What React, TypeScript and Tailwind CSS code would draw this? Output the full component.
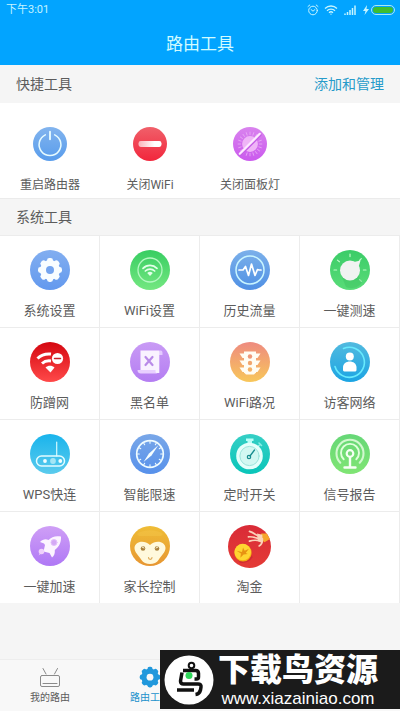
import type { ReactNode } from "react";

type IconProps = { id: string; from: string; to: string; children: ReactNode };

function Disc({ id, from, to, children }: IconProps) {
  return (
    <svg viewBox="0 0 40 40" className="size-full" aria-hidden="true" fill="none" strokeLinecap="round" strokeLinejoin="round">
      <defs>
        <linearGradient id={id} x1="0" y1="0" x2="0" y2="1">
          <stop offset="0" stopColor={from} />
          <stop offset="1" stopColor={to} />
        </linearGradient>
      </defs>
      <circle cx="20" cy="20" r="20" fill={`url(#${id})`} />
      {children}
    </svg>
  );
}

const spokes = (n: number) => Array.from({ length: n }, (_, i) => (i * 360) / n);

function Gear({ body, hole }: { body: string; hole: string }) {
  return (
    <g>
      {spokes(8).map((a) => (
        <rect key={a} x="17" y="8" width="6" height="8" rx="2.4" fill={body} transform={`rotate(${a} 20 20)`} />
      ))}
      <circle cx="20" cy="20" r="10" fill={body} />
      <circle cx="20" cy="20" r="4" fill={hole} />
    </g>
  );
}

const PowerIcon = () => (
  <Disc id="power" from="#82b4ee" to="#589cec">
    <path d="M14.500 9.200a12.800 12.800 0 1 0 11 0" stroke="#e6fbff" strokeWidth="1.800" />
    <path d="M20 5.500v9" stroke="#e6fbff" strokeWidth="2.200" />
  </Disc>
);

const WifiOffIcon = () => (
  <Disc id="wifi-off" from="#f0606a" to="#f2263c">
    <defs>
      <linearGradient id="bar">
        <stop offset="0" stopColor="#fbb3b9" />
        <stop offset=".7" stopColor="#fff" />
      </linearGradient>
    </defs>
    <rect x="6.500" y="16.500" width="27" height="7" rx="2.500" fill="url(#bar)" />
  </Disc>
);

const LampOffIcon = () => (
  <Disc id="lamp" from="#d983ee" to="#cb5aee">
    {spokes(20).map((a) => (
      <path key={a} d="M20 6v3" stroke="#eab0f6" strokeWidth=".9" transform={`rotate(${a} 20 20)`} />
    ))}
    <circle cx="20" cy="20" r="9.300" fill="#efb5f7" />
    <path d="M9 33 32.500 9.500" stroke="#c65fe6" strokeWidth="2.400" />
    <path d="M8 31.500 31.500 8" stroke="#fdeaff" strokeWidth="2.600" />
  </Disc>
);

const SettingsIcon = () => (
  <Disc id="settings" from="#82aef0" to="#6399ee">
    <Gear body="#f8fdff" hole="#73a4ef" />
  </Disc>
);

const WifiIcon = () => (
  <Disc id="wifi" from="#38cd62" to="#74e781">
    <circle cx="20" cy="20" r="12" stroke="#b4f8c2" strokeWidth="1.300" />
    <path d="M13 18.300a10 10 0 0 1 14 0M15.300 21a6.800 6.800 0 0 1 9.400 0" stroke="#e3ffe9" strokeWidth="1.700" />
    <path d="m20 26-2.800-3a4 4 0 0 1 5.600 0Z" fill="#e3ffe9" />
  </Disc>
);

const TrafficIcon = () => (
  <Disc id="traffic" from="#7bb0ea" to="#5090e4">
    <circle cx="20" cy="20" r="14" stroke="#c8f5ff" strokeWidth="1.500" />
    <path d="M9 20h4l2.500-3.500 3 9 3-11.500 3.500 11.500 2.500-6 1.500 .5h2" stroke="#fff" strokeWidth="1.700" />
  </Disc>
);

const SpeedIcon = () => (
  <Disc id="speed" from="#3bcc68" to="#59dc78">
    {[-90, -52, 0, 45, 90, 135].map((a) => (
      <path key={a} d="M20 4v2.600" stroke="#bffbc9" strokeWidth="1.200" transform={`rotate(${a} 20 20)`} />
    ))}
    <path d="m12 27 4 10c4 2 12 2 16-5l-4-7Z" fill="#36b95a" opacity=".35" />
    <circle cx="20" cy="20.500" r="10" fill="#f1f3f1" />
    <path d="m24 12 6.500-1.500-2 6.500Z" fill="#f1f3f1" />
  </Disc>
);

const GuardIcon = () => (
  <Disc id="guard" from="#d40710" to="#ff4949">
    <path d="M7.500 16.500c4-4 8.500-5 13.500-4.500M12 21.500c2.500-2.300 5.500-3 9-2.500" stroke="#fff" strokeWidth="3" strokeLinecap="butt" />
    <path d="m20.500 30.500-5-5c2.500-2.300 6.500-2.300 9 0Z" fill="#fff" />
    <circle cx="27.500" cy="16.500" r="5.600" fill="#fff" />
    <path d="M24.500 16.500h6" stroke="#c92028" strokeWidth="1.500" />
  </Disc>
);

const BlacklistIcon = () => (
  <Disc id="black" from="#c99bf5" to="#b47df2">
    <path d="M28 8.500h2.500c1.500 0 2 1 2 2.500V13H28Z" fill="#e4caff" />
    <path d="M10.500 8.500H28c1 0 1.300 1 1.300 2V31H12.500L10.500 28Z" fill="#f9f2ff" />
    <path d="M7.500 28h18v1.500c0 1.500 1.500 2 3.500 2H11c-2.500 0-3.500-1.500-3.500-3.500Z" fill="#e8cfff" />
    <path d="m15.500 15 7 8m0-8-7 8" stroke="#b98be8" strokeWidth="2.200" />
  </Disc>
);

const RoadIcon = () => (
  <Disc id="road" from="#ee8b80" to="#f8c75a">
    {[10, 17, 24].map((y) => (
      <path key={y} d={`M9.500 ${y + 1.5}h21l-3 4.500h-15Z`} fill="#fffdf4" />
    ))}
    <path d="M14 9.500h12v21l-2 2h-8l-2-2Z" fill="#fffdf4" />
    <circle cx="20" cy="14.500" r="2.200" fill="#ee9878" />
    <circle cx="20" cy="21" r="2.200" fill="#f1a66e" />
    <circle cx="20" cy="27.500" r="2.200" fill="#f4b267" />
  </Disc>
);

const GuestIcon = () => (
  <Disc id="guest" from="#52badf" to="#1ba4e3">
    <path d="M13.500 6.500A15 15 0 1 1 5 24.500" stroke="#68eafd" strokeWidth="1.600" />
    <circle cx="19.800" cy="14.500" r="4" fill="#fff" />
    <path d="M13 28v-2.500c0-8 13.500-8 13.500 0V28c0 1-1 1.500-2 1.500H15c-1 0-2-.5-2-1.500Z" fill="#fff" />
  </Disc>
);

const WpsIcon = () => (
  <Disc id="wps" from="#19b4ec" to="#5bcbed">
    <path d="M26.700 8v14" stroke="#d4faff" strokeWidth="1.200" />
    <rect x="6.500" y="22" width="28" height="10" rx="5" stroke="#e2fcff" strokeWidth="1.500" />
    <circle cx="15" cy="27" r="1.900" fill="#f2feff" />
    <circle cx="23" cy="27" r="2.900" fill="#a5e6f5" />
    <circle cx="30.300" cy="27" r="1.900" fill="#f2feff" />
  </Disc>
);

const LimitIcon = () => (
  <Disc id="limit" from="#79a7e8" to="#5791eb">
    <circle cx="20" cy="20" r="13.300" stroke="#eefbff" strokeWidth="1.700" />
    {spokes(12).map((a) => (
      <path key={a} d="M20 7.500v1.800" stroke="#eefbff" strokeWidth="1.100" transform={`rotate(${a} 20 20)`} />
    ))}
    <path d="m28.500 11-7 10.500-8 6.500 5.500-8.500Z" fill="#f6feff" />
  </Disc>
);

const TimerIcon = () => (
  <Disc id="timer" from="#35cfc5" to="#09c5b9">
    <path d="M16 4.500h7.500v2.500H22V11h-4.500V7H16Z" fill="#b9fff7" />
    <path d="m27.500 13 2.800-2.800M29 9l2.500 2.500" stroke="#8aeee5" strokeWidth="1.600" />
    <circle cx="19.500" cy="22" r="13.300" fill="#e4fffb" />
    <circle cx="19.500" cy="22" r="9.600" fill="#d2f8f2" stroke="#9ce4db" strokeWidth="1" />
    <path d="m24.500 16-4.500 6" stroke="#198d90" strokeWidth="1.300" />
    <circle cx="19" cy="23" r="1.700" stroke="#198d90" strokeWidth="1.200" />
  </Disc>
);

const SignalIcon = () => (
  <Disc id="signal" from="#66d777" to="#80e574">
    <path d="M10.300 28.700a13.500 13.500 0 1 1 19.400 0" stroke="#d2f8cf" strokeWidth="2.100" />
    <path d="M13.700 25.300a9 9 0 1 1 12.600 0" stroke="#e0ffdc" strokeWidth="1.900" />
    <circle cx="20" cy="19.500" r="3.300" fill="#77d979" stroke="#f6fff5" strokeWidth="2.200" />
    <path d="M20 23.500V33M14.500 33.500h11" stroke="#f6fff5" strokeWidth="2.400" />
  </Disc>
);

const RocketIcon = () => (
  <Disc id="rocket" from="#cf9ff6" to="#af78f5">
    <path d="M31 10.500c-5-1-9.500 0-12.500 3.500-3-1.500-6-.5-8.500 2l4 1.500 1 1.500-1.500 6.500 6 1.500 2.500 4.500c2.500-2 3-4.500 2.800-7.500 5-3.500 6.500-8.500 6.200-13.500Z" fill="#fcf4ff" />
    <circle cx="24" cy="16.500" r="3" fill="#d4a9f5" stroke="#e3bffb" />
    <circle cx="11.500" cy="25.500" r="2.800" fill="#efd1fb" />
    <path d="m8.500 29.500 1.500-2.500h2Z" fill="#efd1fb" />
  </Disc>
);

const MonkeyIcon = () => (
  <Disc id="monkey" from="#efbd36" to="#e79632">
    <path d="M7 8C13 3 27 3 33 8L31 10H9Z" fill="#f4c347" opacity=".5" />
    <path d="M4.500 22c0-6 9-9 15.500-3 6.500-6 15.500-3 15.500 3 0 4.500-4 7-7 12-3 5.200-14 5.200-17 0-3-5-7-7.500-7-12Z" fill="#fff9dc" />
    <circle cx="13" cy="22.500" r="2.300" fill="#a9813d" />
    <circle cx="27" cy="22.500" r="2.300" fill="#a9813d" />
    <path d="m12 21 2 1m14-1-2 1" stroke="#fff9dc" strokeWidth="1" />
    <path d="M18.500 31.500c0 2.500 3.500 2.500 3.500 0" stroke="#dda957" strokeWidth="1.200" />
  </Disc>
);

const GoldIcon = () => (
  <Disc id="gold" from="#d92b37" to="#e43b36">
    <path d="m8 31 3 4c5 1 9-1 12-5l-3-5Z" fill="#b91f2e" opacity=".45" />
    <path d="m31 8 5 0 3 5-5 3-4-3Z" fill="#f6a62c" />
    <path d="M32 13c0 2 0 5-3 6.500M31 12c-4-2-7-5-11-6m10 7c-4-1-7-2.500-11-2m10 3.500c-3-.500-6-.500-9 .500" stroke="#fbd3b9" strokeWidth="1.600" />
    <path d="m27 8 5 1v8l-4-2Z" fill="#fbd3b9" />
    <circle cx="14" cy="26" r="8" fill="#f5a812" />
    <circle cx="13.700" cy="25.200" r="7.700" fill="#ffd531" />
    <path d="m8 24 5 1 1-4 1.500 3 4-2-3 4 2 1-4 .5-3 3 .5-4Z" fill="#e79312" />
  </Disc>
);

const quickTools = [
  { label: "重启路由器", icon: <PowerIcon /> },
  { label: "关闭WiFi", icon: <WifiOffIcon /> },
  { label: "关闭面板灯", icon: <LampOffIcon /> },
];

const systemTools = [
  { label: "系统设置", icon: <SettingsIcon /> },
  { label: "WiFi设置", icon: <WifiIcon /> },
  { label: "历史流量", icon: <TrafficIcon /> },
  { label: "一键测速", icon: <SpeedIcon /> },
  { label: "防蹭网", icon: <GuardIcon /> },
  { label: "黑名单", icon: <BlacklistIcon /> },
  { label: "WiFi路况", icon: <RoadIcon /> },
  { label: "访客网络", icon: <GuestIcon /> },
  { label: "WPS快连", icon: <WpsIcon /> },
  { label: "智能限速", icon: <LimitIcon /> },
  { label: "定时开关", icon: <TimerIcon /> },
  { label: "信号报告", icon: <SignalIcon /> },
  { label: "一键加速", icon: <RocketIcon /> },
  { label: "家长控制", icon: <MonkeyIcon /> },
  { label: "淘金", icon: <GoldIcon />, large: true },
];

function StatusBar() {
  return (
    <div className="flex h-5 items-center justify-between pr-[5px] pl-1.5 text-[#c5f4ff]">
      <span className="text-[11px] leading-5">下午3:01</span>
      <div className="flex items-center gap-[5px]" aria-hidden="true">
        <svg className="size-3" viewBox="0 0 12 12" fill="none" stroke="currentColor" strokeLinecap="round">
          <circle cx="6" cy="6.500" r="4.300" />
          <path d="M1 2.500 2.800 1M11 2.500 9.200 1M4 5.500l2 1.700 2-1.700" />
        </svg>
        <svg className="h-3 w-3.5" viewBox="0 0 14 12" fill="none" stroke="currentColor" strokeWidth="1.300">
          <path d="M1 4.500a8.500 8.500 0 0 1 12 0M3 6.700a5.700 5.700 0 0 1 8 0M5 8.700a2.900 2.900 0 0 1 4 0" />
          <path d="m7 11-1-1.300h2Z" fill="currentColor" stroke="none" />
        </svg>
        <svg className="h-3 w-3.5" viewBox="0 0 14 12" stroke="currentColor" strokeWidth="1.500">
          <path d="M2 11V9.500M4.500 11V8M7 11V6M9.500 11V4M12 11V1.500" />
        </svg>
        <svg className="h-3 w-2" viewBox="0 0 8 12" fill="currentColor">
          <path d="M5 1 1 7h2.500L2.500 11 7 5H4.500Z" />
        </svg>
        <div className="-ml-1 h-2.5 w-6 rounded-full border border-[#a9e9f5] p-px">
          <div className="h-full rounded-full bg-[#40bd31]" />
        </div>
      </div>
    </div>
  );
}

function Watermark() {
  return (
    <aside className="absolute right-0 bottom-0.5 flex h-[59px] w-60 items-center gap-1 bg-[#1b1b1b] pl-1 font-['Liberation_Sans','Noto_Sans_CJK_SC',sans-serif] text-white">
      <svg className="size-[50px] shrink-0" viewBox="0 0 50 50" fill="none" stroke="#111" strokeWidth="4" strokeLinejoin="round" aria-hidden="true">
        <circle cx="25" cy="25" r="24.500" fill="#fff" stroke="none" />
        <circle cx="27.500" cy="10.500" r="2.800" strokeWidth="2" />
        <path d="M19 15.500h12.500q3 0 3 3V22q0 2-2 2h-2" strokeWidth="3.500" />
        <path d="M18 17.500 16.500 26q0 3 3 3H34q3.500 0 3 3L36.500 35q-1 4-5 4.500" strokeWidth="3.500" />
        <path d="M13 35h17" strokeWidth="3.500" />
        <circle cx="25" cy="20.500" r="3.500" fill="#2fd65a" stroke="none" />
      </svg>
      <div className="flex flex-col items-center">
        <strong className="text-[32px] leading-[38px] font-black whitespace-nowrap">下载鸟资源</strong>
        <span className="text-[17px] leading-5">www.xiazainiao.com</span>
      </div>
    </aside>
  );
}

export default function App() {
  return (
    <div className="relative flex min-h-screen flex-col bg-[#f5f5f5] font-[Roboto,'Noto_Sans_CJK_SC',sans-serif] text-[#5c5c5c]">
      <header className="bg-[#02a4ff]">
        <StatusBar />
        <h1 className="h-[45px] text-center text-[17px] leading-[48px] text-[#d2fbff]">路由工具</h1>
      </header>

      <main className="flex-1">
        <section>
          <div className="flex h-[38px] items-center justify-between px-4 text-sm">
            <h2>快捷工具</h2>
            <button type="button" className="text-[#279bca]">添加和管理</button>
          </div>
          <div className="grid grid-cols-4 bg-white">
            {quickTools.map((t) => (
              <button key={t.label} type="button" className="flex h-[95px] flex-col items-center pt-6">
                <span className="size-[34px]">{t.icon}</span>
                <span className="mt-3.5 text-xs leading-5 whitespace-nowrap">{t.label}</span>
              </button>
            ))}
          </div>
        </section>

        <section>
          <h2 className="h-[37px] border-t border-[#ebebeb] px-4 text-sm leading-[36px]">系统工具</h2>
          <div className="grid grid-cols-4 gap-px border-t border-[#ececec] bg-[#ececec] pr-px">
            {systemTools.map((t) => (
              <button key={t.label} type="button" className="flex h-[91px] flex-col items-center bg-white pt-3.5">
                <span className="flex size-10 items-center justify-center">
                  <span className={t.large ? "size-[43px] shrink-0" : "size-10"}>{t.icon}</span>
                </span>
                <span className="mt-[11px] text-[13px] leading-5">{t.label}</span>
              </button>
            ))}
            <div className="bg-white" />
          </div>
        </section>
      </main>

      <nav className="grid h-[52px] grid-cols-4 border-t border-[#ededed] bg-[#f8f8f8] text-[10px]">
        <button type="button" className="flex flex-col items-center pt-1.5">
          <svg className="h-6 w-6" viewBox="0 0 24 24" fill="none" stroke="#8a8a8a" strokeLinecap="round" aria-hidden="true">
            <rect x="2.500" y="9.500" width="19" height="11" rx="1.500" />
            <path d="M5 17.500h14M5 2.500 8 8M19.500 2.500 16.500 8" />
          </svg>
          <span className="leading-4">我的路由</span>
        </button>
        <button type="button" aria-current="page" className="flex flex-col items-center pt-1.5 text-[#2192cc]">
          <svg className="h-6 w-6" viewBox="6 7 28 28" aria-hidden="true">
            <Gear body="#2198dc" hole="#f8f8f8" />
          </svg>
          <span className="leading-4">路由工具</span>
        </button>
      </nav>
      <Watermark />
    </div>
  );
}
